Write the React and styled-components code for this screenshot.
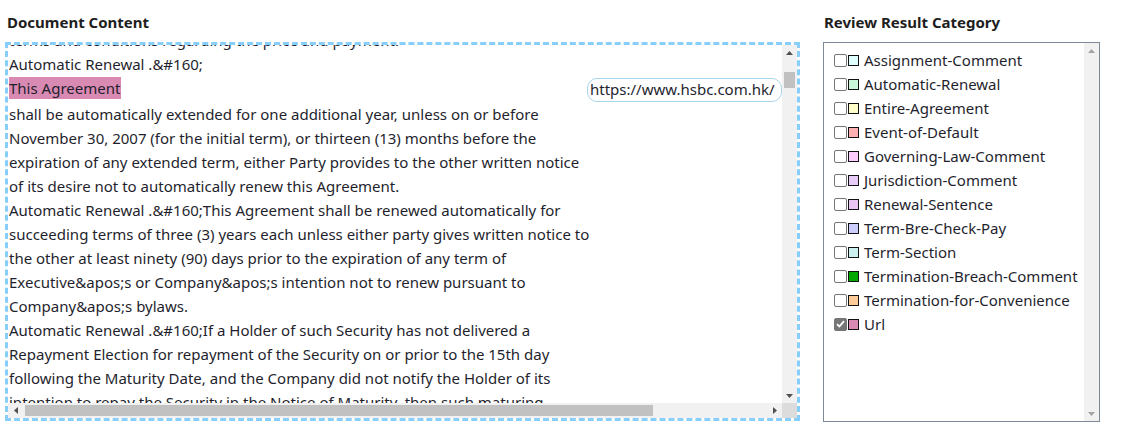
import React, { useEffect, useRef } from "react"
import styled, { createGlobalStyle } from 'styled-components'

const GlobalStyle = createGlobalStyle`
    html, body {
        margin: 0;
        padding: 0;
        background: #fff;
    }
    body {
        font-family: 'Noto Sans', 'Open Sans', sans-serif;
        color: #212529;
    }
`;

const Page = styled.div`
    display: flex;
    align-items: flex-start;
    gap: 23px;
    padding: 10px 0 0 5px;
`;

const Column = styled.div`
    display: flex;
    flex-flow: column;
    width: ${props => props.width}px;
`;

const Heading = styled.div`
    font-weight: 700;
    font-size: 15px;
    line-height: 24px;
    height: 24px;
    padding-left: ${props => props.indent || 0}px;
    margin-bottom: 8px;
    color: #1e1e1e;
`;

const DocFrame = styled.div`
    border: 3px dashed #87cefa;
    box-sizing: border-box;
    height: 379px;
    display: grid;
    grid-template-columns: 1fr 15px;
    grid-template-rows: 1fr 15px;
    overflow: hidden;
`;

const Viewport = styled.div`
    overflow: hidden;
    min-width: 0;
    min-height: 0;
`;

const DocBody = styled.div`
    position: relative;
    width: 916px;
    padding-left: 1px;
    font-size: 15px;
    line-height: 24px;
    color: #1f1f2e;
`;

const Line = styled.div`
    white-space: nowrap;
    height: ${props => props.tall ? 26 : 24}px;
`;

const Mark = styled.span`
    background: ${props => props.color};
    padding: 1px 1px 1px 0;
`;

const UrlTip = styled.div`
    position: absolute;
    left: 579px;
    top: ${props => props.top}px;
    height: 22px;
    line-height: 21px;
    padding: 0 6px 0 2px;
    border: 1px solid #a9d6ea;
    border-radius: 10px;
    background: #fff;
    font-size: 15px;
    white-space: nowrap;
`;

/* hand-drawn scrollbars (headless page shows none) */
const Bar = styled.div`
    display: flex;
    flex-flow: ${props => props.horizontal ? 'row' : 'column'};
    background: #f1f1f1;
    min-width: 0;
    min-height: 0;
`;

const BarButton = styled.div`
    flex: 0 0 15px;
    width: 15px;
    height: 15px;
    display: flex;
    align-items: center;
    justify-content: center;
`;

const Track = styled.div`
    flex: 1;
    display: flex;
    flex-flow: ${props => props.horizontal ? 'row' : 'column'};
    padding: ${props => props.horizontal ? '2px 0' : '0 2px'};
`;

const Thumb = styled.div`
    background: #c1c1c1;
    flex: 0 0 auto;
`;

const Corner = styled.div`
    background: #dcdcdc;
`;

const arrows = {
    up: '0,4 7,4 3.5,0',
    down: '0,0 7,0 3.5,4',
    left: '4,0 4,7 0,3.5',
    right: '0,0 0,7 4,3.5',
};

const Arrow = ({ dir, color }) => {
    const flat = dir === 'up' || dir === 'down';
    return (
        <BarButton>
            <svg width={flat ? 7 : 4} height={flat ? 4 : 7} viewBox={flat ? '0 0 7 4' : '0 0 4 7'}>
                <polygon points={arrows[dir]} fill={color} />
            </svg>
        </BarButton>
    );
};

const ScrollBar = ({ horizontal, thumbAt, thumbSize, color = '#505050' }) => (
    <Bar horizontal={horizontal}>
        <Arrow dir={horizontal ? 'left' : 'up'} color={color} />
        <Track horizontal={horizontal}>
            {thumbSize ? (
                <Thumb style={horizontal
                    ? { marginLeft: thumbAt, width: thumbSize }
                    : { marginTop: thumbAt, height: thumbSize }} />
            ) : null}
        </Track>
        <Arrow dir={horizontal ? 'right' : 'down'} color={color} />
    </Bar>
);

const CategoryBox = styled.div`
    border: 1px solid #7d8996;
    height: 380px;
    box-sizing: border-box;
    display: grid;
    grid-template-columns: 1fr 15px;
`;

const CategoryList = styled.div`
    padding: 5px 0 0 10px;
`;

const CategoryRow = styled.label`
    display: flex;
    align-items: center;
    height: 24px;
    font-size: 15px;
    color: #1f1f2e;
`;

const Check = styled.span`
    width: 13px;
    height: 13px;
    box-sizing: border-box;
    border: 1px solid #767676;
    border-radius: 2px;
    background: ${props => props.checked ? '#767676' : '#fff'};
    display: inline-flex;
    align-items: center;
    justify-content: center;
`;

const Swatch = styled.span`
    width: 11px;
    height: 11px;
    box-sizing: border-box;
    border: 1px solid #111;
    background: ${props => props.color};
    margin: 0 5px 0 1px;
`;

const hiddenLines = [
    "The Company shall pay the Consultant the fees set out in Schedule 1 within thirty",
    "(30) days of receipt of a valid invoice, provided that the invoice has been",
    "approved by the Company in writing.",
    "Automatic Renewal .&#160;This Agreement shall continue in force for an initial",
    "period of twelve (12) months and shall thereafter renew for successive periods",
    "of twelve (12) months unless terminated by either party giving not less than",
    "sixty (60) days written notice prior to the end of the then current period.",
    "Any renewal shall be upon the same terms and conditions, save that the parties",
    "may agree in writing to revise the fees payable under this Agreement, including",
    "terms and conditions regarding the price and payment.",
];

const visibleLines = [
    "Automatic Renewal .&#160;",
    null,
    "shall be automatically extended for one additional year, unless on or before",
    "November 30, 2007 (for the initial term), or thirteen (13) months before the",
    "expiration of any extended term, either Party provides to the other written notice",
    "of its desire not to automatically renew this Agreement.",
    "Automatic Renewal .&#160;This Agreement shall be renewed automatically for",
    "succeeding terms of three (3) years each unless either party gives written notice to",
    "the other at least ninety (90) days prior to the expiration of any term of",
    "Executive&apos;s or Company&apos;s intention not to renew pursuant to",
    "Company&apos;s bylaws.",
    "Automatic Renewal .&#160;If a Holder of such Security has not delivered a",
    "Repayment Election for repayment of the Security on or prior to the 15th day",
    "following the Maturity Date, and the Company did not notify the Holder of its",
    "intention to repay the Security in the Notice of Maturity, then such maturing",
    "Security shall be automatically renewed for a further period of one year.",
];

const categories = [
    ["Assignment-Comment", "#e0ffff"],
    ["Automatic-Renewal", "#c8f8d8"],
    ["Entire-Agreement", "#ffffcc"],
    ["Event-of-Default", "#ffb0b0"],
    ["Governing-Law-Comment", "#ffccff"],
    ["Jurisdiction-Comment", "#e8ccf8"],
    ["Renewal-Sentence", "#eac4f2"],
    ["Term-Bre-Check-Pay", "#ccccff"],
    ["Term-Section", "#ccf0f0"],
    ["Termination-Breach-Comment", "#00a800"],
    ["Termination-for-Convenience", "#ffcc99"],
    ["Url", "#d98ab3"],
];

const SCROLL_TOP = 9 * 24 + 17;

const App = () => {
    const viewport = useRef(null);

    useEffect(() => {
        if (viewport.current) viewport.current.scrollTop = SCROLL_TOP;
    }, []);

    return (
        <>
            <GlobalStyle />
            <Page>
                <Column width={795}>
                    <Heading indent={2}>Document Content</Heading>
                    <DocFrame>
                        <Viewport ref={viewport}>
                            <DocBody>
                                {hiddenLines.map((text, i) => <Line key={'h' + i}>{text}</Line>)}
                                {visibleLines.map((text, i) => (
                                    <Line key={'v' + i} tall={text === null}>
                                        {text === null ? <Mark color="#d98ab3">This Agreement</Mark> : text}
                                    </Line>
                                ))}
                                <UrlTip top={11 * 24 + 2}>https://www.hsbc.com.hk/</UrlTip>
                            </DocBody>
                        </Viewport>
                        <ScrollBar thumbAt={12} thumbSize={16} />
                        <ScrollBar horizontal thumbAt={2} thumbSize={628} />
                        <Corner />
                    </DocFrame>
                </Column>
                <Column width={277}>
                    <Heading indent={1}>Review Result Category</Heading>
                    <CategoryBox>
                        <CategoryList>
                            {categories.map(([name, color]) => (
                                <CategoryRow key={name}>
                                    <Check checked={name === 'Url'}>
                                        {name === 'Url' && (
                                            <svg width="9" height="8" viewBox="0 0 9 8">
                                                <path d="M1 4.2 L3.4 6.5 L8 1.2" stroke="#fff" strokeWidth="1.8" fill="none" />
                                            </svg>
                                        )}
                                    </Check>
                                    <Swatch color={color} />
                                    {name}
                                </CategoryRow>
                            ))}
                        </CategoryList>
                        <ScrollBar color="#a3a3a3" />
                    </CategoryBox>
                </Column>
            </Page>
        </>
    )
}

export default App;
